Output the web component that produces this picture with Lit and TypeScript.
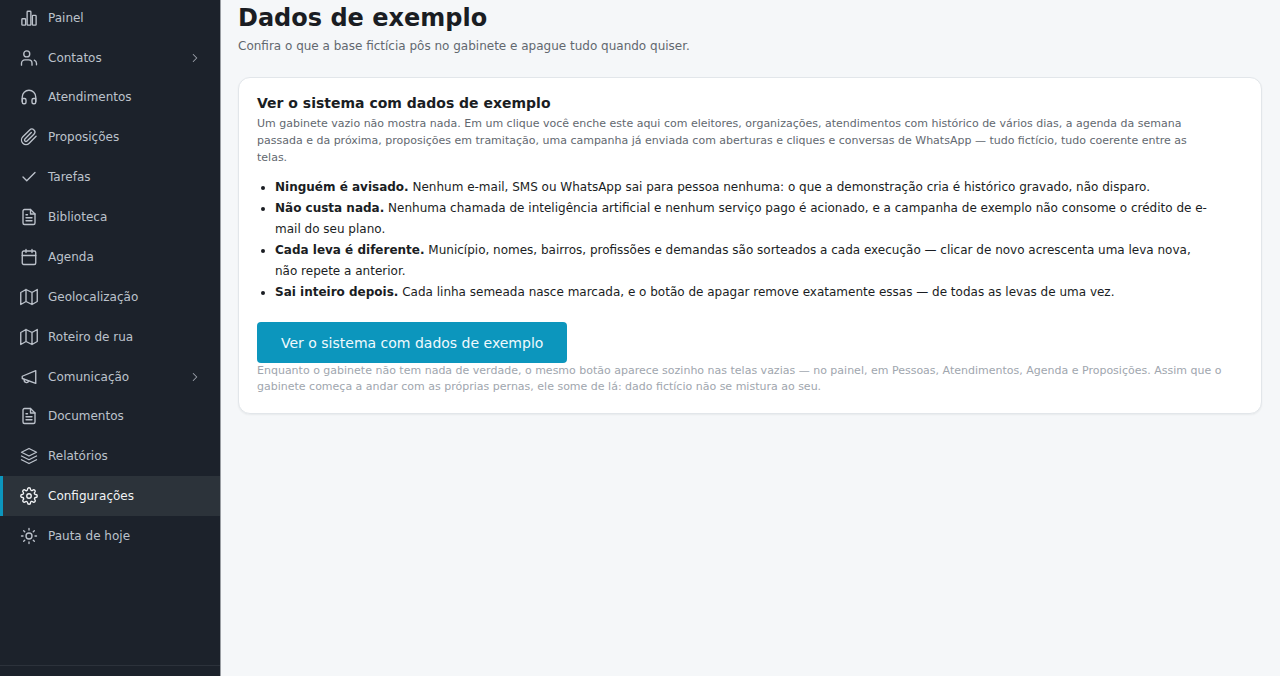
import { LitElement, html, css, svg, nothing } from "lit";
import { customElement, property } from "lit/decorators.js";
import { classMap } from "lit/directives/class-map.js";

const icons = {
  chart: svg`<rect x="2.500" y="13" width="5" height="8.500" rx="1"/><rect x="9.500" y="3" width="5" height="18.500" rx="1"/><rect x="16.500" y="8.500" width="5" height="13" rx="1"/>`,
  users: svg`<circle cx="9" cy="6.500" r="4"/><path d="M2 21.500V19a4.500 4.500 0 0 1 4.500-4.500h5A4.500 4.500 0 0 1 16 19v2.500"/><path d="M19 14.800a4.500 4.500 0 0 1 3 4.200v2"/>`,
  headphones: svg`<path d="M3 18v-6a9 9 0 0 1 18 0v6"/><path d="M21 19a2 2 0 0 1-2 2h-1a2 2 0 0 1-2-2v-3a2 2 0 0 1 2-2h3zM3 19a2 2 0 0 0 2 2h1a2 2 0 0 0 2-2v-3a2 2 0 0 0-2-2H3z"/>`,
  clip: svg`<path d="m21.440 11.050-9.190 9.190a6 6 0 0 1-8.490-8.490l9.190-9.190a4 4 0 0 1 5.660 5.660l-9.200 9.190a2 2 0 0 1-2.830-2.830l8.490-8.480"/>`,
  check: svg`<path d="M20 6 9 17l-5-5"/>`,
  file: svg`<path d="M14 2H6a2 2 0 0 0-2 2v16a2 2 0 0 0 2 2h12a2 2 0 0 0 2-2V8z"/><path d="M14 2v6h6M16 13H8M16 17H8M10 9H8"/>`,
  calendar: svg`<rect x="3" y="4" width="18" height="18" rx="2"/><path d="M16 2v4M8 2v4M3 10h18"/>`,
  map: svg`<path d="M1 6v16l7-4 8 4 7-4V2l-7 4-8-4zM8 2v16M16 6v16"/>`,
  megaphone: svg`<path d="M21 3.500v17L3 14v-3z"/><path d="M11.600 17.400a3 3 0 0 1-5.800-2"/>`,
  layers: svg`<path d="M12 2 2 7l10 5 10-5zM2 17l10 5 10-5M2 12l10 5 10-5"/>`,
  gear: svg`<circle cx="12" cy="12" r="3"/><path d="M19.400 15a1.650 1.650 0 0 0 .330 1.820l.060.060a2 2 0 1 1-2.830 2.830l-.060-.060a1.650 1.650 0 0 0-2.800 1.170V21a2 2 0 0 1-4 0v-.090A1.650 1.650 0 0 0 9 19.400a1.650 1.650 0 0 0-1.820.330l-.060.060a2 2 0 1 1-2.830-2.830l.060-.060A1.650 1.650 0 0 0 3.180 14H3a2 2 0 0 1 0-4h.090A1.650 1.650 0 0 0 4.600 9a1.650 1.650 0 0 0-.330-1.820l-.060-.060a2 2 0 1 1 2.830-2.830l.060.060A1.650 1.650 0 0 0 10 3.180V3a2 2 0 0 1 4 0v.090a1.650 1.650 0 0 0 2.820 1.180l.060-.060a2 2 0 1 1 2.830 2.830l-.060.060A1.650 1.650 0 0 0 20.910 10H21a2 2 0 0 1 0 4h-.090a1.650 1.650 0 0 0-1.510 1z"/>`,
  sun: svg`<circle cx="12" cy="12" r="4"/><path d="M12 2v2M12 20v2M4.900 4.900l1.400 1.400M17.700 17.700l1.400 1.400M2 12h2M20 12h2M6.300 17.700l-1.400 1.400M19.100 4.900l-1.400 1.400"/>`,
  chevron: svg`<path d="m9 18 6-6-6-6"/>`,
};

type IconName = keyof typeof icons;

interface NavEntry {
  label: string;
  icon: IconName;
  group?: boolean;
  active?: boolean;
}

const entries: NavEntry[] = [
  { label: "Painel", icon: "chart" },
  { label: "Contatos", icon: "users", group: true },
  { label: "Atendimentos", icon: "headphones" },
  { label: "Proposições", icon: "clip" },
  { label: "Tarefas", icon: "check" },
  { label: "Biblioteca", icon: "file" },
  { label: "Agenda", icon: "calendar" },
  { label: "Geolocalização", icon: "map" },
  { label: "Roteiro de rua", icon: "map" },
  { label: "Comunicação", icon: "megaphone", group: true },
  { label: "Documentos", icon: "file" },
  { label: "Relatórios", icon: "layers" },
  { label: "Configurações", icon: "gear", active: true },
  { label: "Pauta de hoje", icon: "sun" },
];

@customElement("ui-icon")
class UiIcon extends LitElement {
  @property() name: IconName = "chart";

  static styles = css`
    :host {
      display: block;
      flex: none;
      width: 18px;
      height: 18px;
    }
    .glyph {
      display: block;
      width: 100%;
      height: 100%;
      fill: none;
      stroke: currentColor;
      stroke-width: 1.8;
      stroke-linecap: round;
      stroke-linejoin: round;
    }
  `;

  render() {
    return html`<svg class="glyph" viewBox="0 0 24 24" aria-hidden="true">${icons[this.name]}</svg>`;
  }
}

@customElement("side-nav")
class SideNav extends LitElement {
  static styles = css`
    :host {
      display: flex;
      flex-direction: column;
      box-sizing: border-box;
      background: #1c222b;
      overflow: hidden;
    }
    .list {
      flex: 1;
      margin-top: -2px;
    }
    .item {
      display: flex;
      align-items: center;
      gap: 10px;
      box-sizing: border-box;
      width: 100%;
      height: 40px;
      padding: 0 18px 0 17px;
      border: 0;
      border-left: 3px solid transparent;
      background: none;
      color: #bcc2cb;
      font: inherit;
      line-height: 20px;
      text-align: left;
      text-decoration: none;
      cursor: pointer;
    }
    .group {
      height: 39px;
    }
    .active {
      border-left-color: #0c96bd;
      background: #2c333a;
      color: #f1f3f5;
    }
    .label {
      flex: 1;
    }
    .chevron {
      width: 14px;
      height: 14px;
      opacity: 0.8;
    }
    .footer {
      height: 10px;
      border-top: 1px solid #2c323b;
    }
  `;

  private row(e: NavEntry) {
    const inner = html`<ui-icon name=${e.icon}></ui-icon><span class="label">${e.label}</span>${e.group
        ? html`<ui-icon class="chevron" name="chevron"></ui-icon>`
        : nothing}`;
    const cls = classMap({ item: true, group: !!e.group, active: !!e.active });
    return e.group
      ? html`<button type="button" class=${cls} aria-expanded="false">${inner}</button>`
      : html`<a href="#" class=${cls} aria-current=${e.active ? "page" : nothing}>${inner}</a>`;
  }

  render() {
    return html`<nav class="list">${entries.map((e) => this.row(e))}</nav><div class="footer"></div>`;
  }
}

@customElement("app-root")
class AppRoot extends LitElement {
  static styles = css`
    :host {
      display: grid;
      grid-template-columns: 220px minmax(0, 1fr);
      min-height: 100vh;
      background: #f5f7f9;
      color: #1a1d23;
      font: 12px/20px "DejaVu Sans", sans-serif;
    }
    .content {
      border-left: 1px solid #9a9ea3;
      padding: 0 18px 24px 17px;
    }
    .title {
      margin: 0;
      font-size: 24px;
      line-height: 36px;
    }
    .subtitle {
      margin: 0 0 21px;
      color: #62686f;
    }
    .card {
      padding: 15px 18px 18px;
      border: 1px solid #e2e6ea;
      border-radius: 12px;
      background: #ffffff;
      box-shadow: 0 1px 2px rgba(20, 30, 40, 0.06);
    }
    .heading {
      margin: 0;
      font-size: 14px;
      line-height: 20px;
    }
    .intro {
      margin: 2px 0 11px;
      padding-right: 36px;
      color: #62686f;
      font-size: 11px;
      line-height: 17px;
    }
    .points {
      margin: 0 0 19px;
      padding: 0 32px 0 18px;
      line-height: 21px;
    }
    .primary {
      display: block;
      height: 41px;
      padding: 0 24px;
      border: 0;
      border-radius: 4px;
      background: #0c96bd;
      color: #f0fafd;
      font: inherit;
      font-size: 14px;
      cursor: pointer;
    }
    .note {
      margin: 0;
      color: #a0a6ae;
      font-size: 11px;
      line-height: 16px;
    }
  `;

  render() {
    return html`
      <side-nav></side-nav>
      <main class="content">
        <h1 class="title">Dados de exemplo</h1>
        <p class="subtitle">Confira o que a base fictícia pôs no gabinete e apague tudo quando quiser.</p>
        <section class="card">
          <h2 class="heading">Ver o sistema com dados de exemplo</h2>
          <p class="intro">Um gabinete vazio não mostra nada. Em um clique você enche este aqui com eleitores, organizações, atendimentos com histórico de vários dias, a agenda da semana passada e da próxima, proposições em tramitação, uma campanha já enviada com aberturas e cliques e conversas de WhatsApp — tudo fictício, tudo coerente entre as telas.</p>
          <ul class="points">
            <li><strong>Ninguém é avisado.</strong> Nenhum e-mail, SMS ou WhatsApp sai para pessoa nenhuma: o que a demonstração cria é histórico gravado, não disparo.</li>
            <li><strong>Não custa nada.</strong> Nenhuma chamada de inteligência artificial e nenhum serviço pago é acionado, e a campanha de exemplo não consome o crédito de e-mail do seu plano.</li>
            <li><strong>Cada leva é diferente.</strong> Município, nomes, bairros, profissões e demandas são sorteados a cada execução — clicar de novo acrescenta uma leva nova, não repete a anterior.</li>
            <li><strong>Sai inteiro depois.</strong> Cada linha semeada nasce marcada, e o botão de apagar remove exatamente essas — de todas as levas de uma vez.</li>
          </ul>
          <button type="button" class="primary">Ver o sistema com dados de exemplo</button>
          <p class="note">Enquanto o gabinete não tem nada de verdade, o mesmo botão aparece sozinho nas telas vazias — no painel, em Pessoas, Atendimentos, Agenda e Proposições. Assim que o gabinete começa a andar com as próprias pernas, ele some de lá: dado fictício não se mistura ao seu.</p>
        </section>
      </main>
    `;
  }
}
